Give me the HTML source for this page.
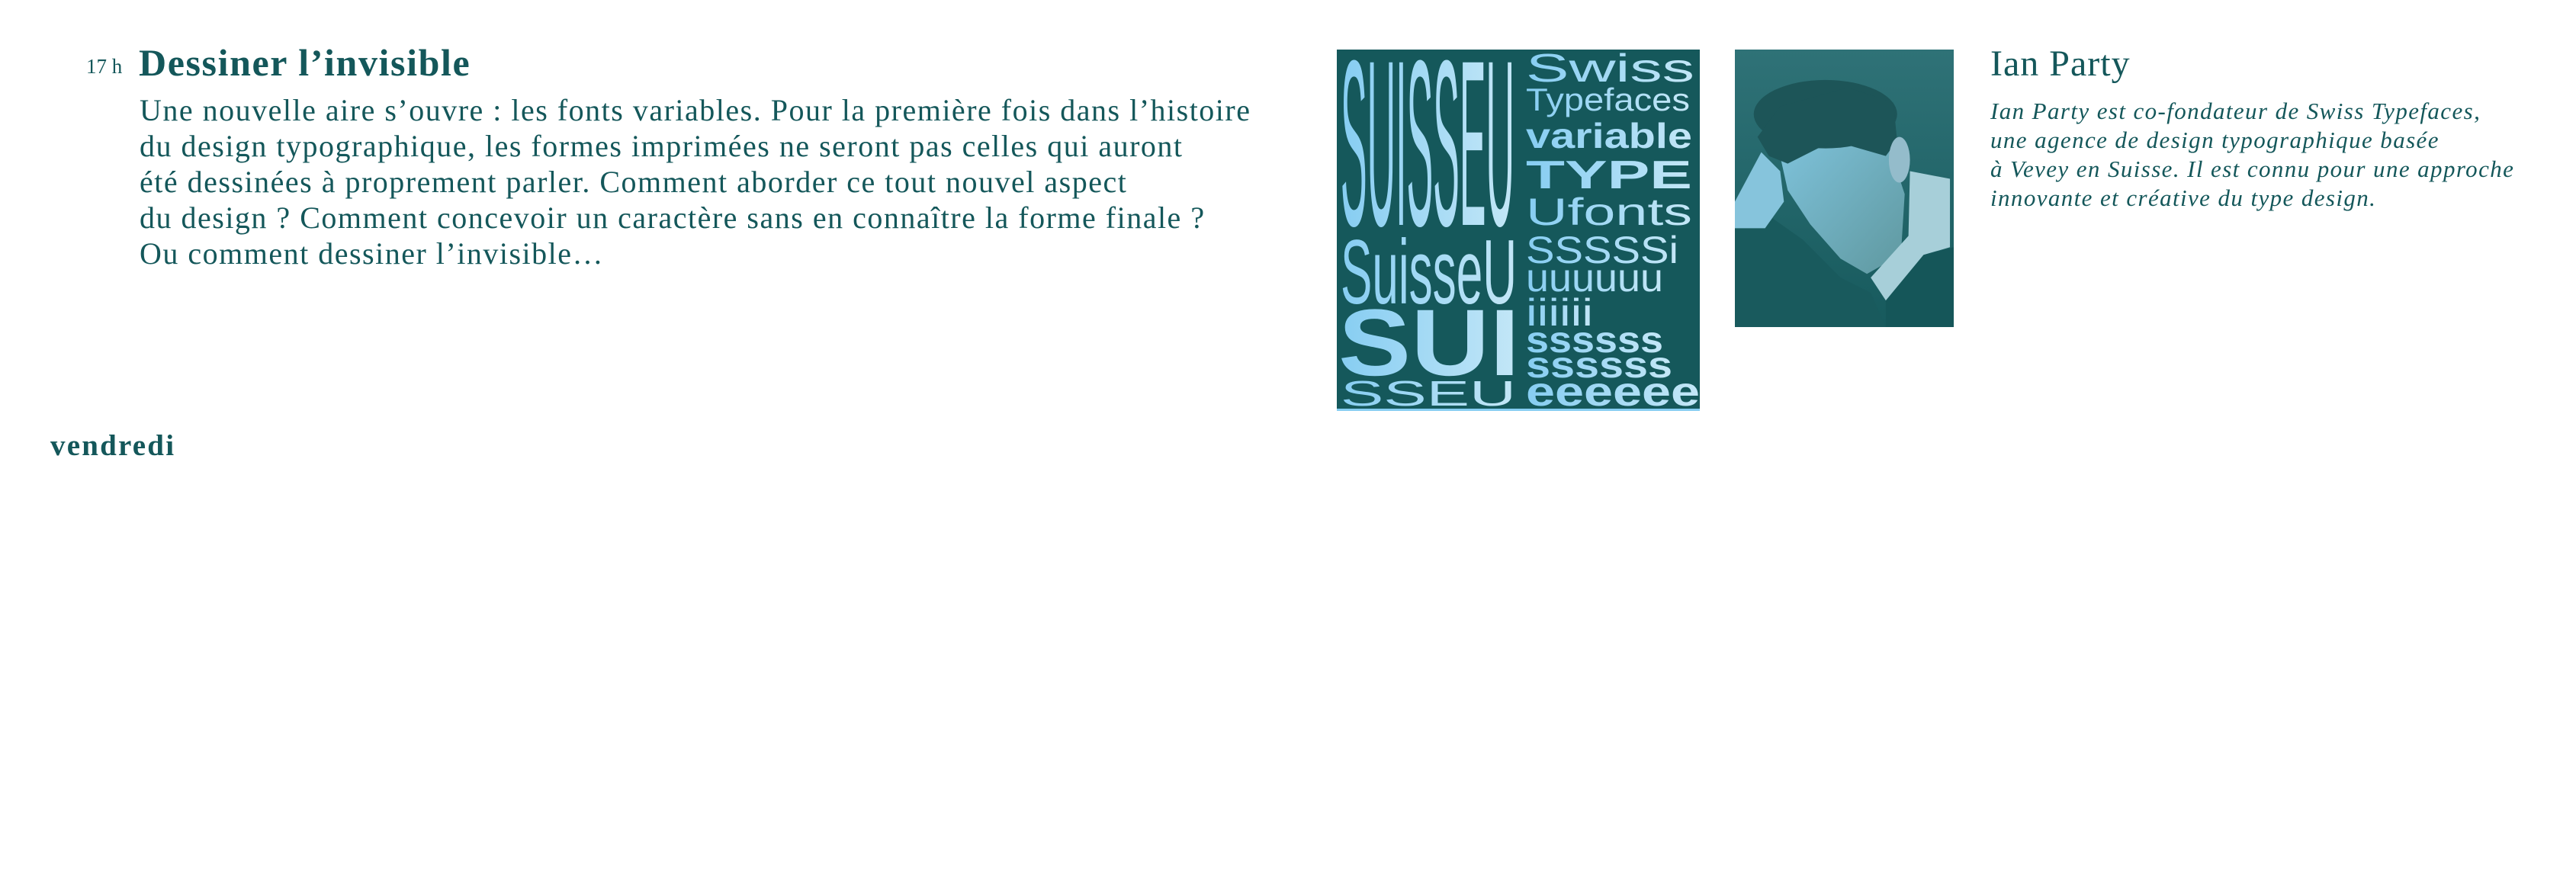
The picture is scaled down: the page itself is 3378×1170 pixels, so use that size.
<!DOCTYPE html>
<html><head><meta charset="utf-8"><style>
html,body{margin:0;padding:0;background:#fff;}
body{width:3378px;height:1170px;position:relative;overflow:hidden;color:#14575a;font-family:"Liberation Serif",serif;}
.a{position:absolute;white-space:nowrap;}
.h{font-size:27px;left:113px;top:72px;}
.t{font-size:50px;font-weight:bold;left:182px;top:53px;letter-spacing:1.6px;}
.b{left:183px;top:121px;font-size:40px;line-height:47px;letter-spacing:1.5px;}
.v{font-size:39px;font-weight:bold;left:66px;top:562px;letter-spacing:2.2px;}
.n{font-size:48px;left:2610px;top:56px;letter-spacing:1px;}
.bio{left:2610px;top:127px;font-size:31px;line-height:38px;font-style:italic;letter-spacing:1.4px;}
</style></head><body>
<div class="a h">17 h</div>
<div class="a t">Dessiner l’invisible</div>
<div class="a b">Une nouvelle aire s’ouvre : les fonts variables. Pour la première fois dans l’histoire<br>du design typographique, les formes imprimées ne seront pas celles qui auront<br>été dessinées à proprement parler. Comment aborder ce tout nouvel aspect<br>du design ? Comment concevoir un caractère sans en connaître la forme finale ?<br>Ou comment dessiner l’invisible…</div>
<div class="a v">vendredi</div>

<svg class="a" style="left:1753px;top:65px" width="476" height="474" viewBox="0 0 476 474" font-family="Liberation Sans, sans-serif">
<defs><linearGradient id="g" x1="0" x2="1"><stop offset="0" stop-color="#86cdf2"/><stop offset="1" stop-color="#c4e7f7"/></linearGradient></defs>
<rect width="476" height="474" fill="#15585b"/>
<rect y="471" width="476" height="3" fill="#86cdf2"/>
<g fill="url(#g)">
<text x="5" y="230" font-size="310" textLength="228" lengthAdjust="spacingAndGlyphs">SUISSEU</text>
<text x="248" y="42" font-size="52" textLength="221" lengthAdjust="spacingAndGlyphs">Swiss</text>
<text x="248" y="80" font-size="42" textLength="215" lengthAdjust="spacingAndGlyphs">Typefaces</text>
<text x="248" y="129" font-size="46" font-weight="bold" textLength="218" lengthAdjust="spacingAndGlyphs">variable</text>
<text x="248" y="182" font-size="52" font-weight="bold" textLength="218" lengthAdjust="spacingAndGlyphs">TYPE</text>
<text x="248" y="230" font-size="50" textLength="218" lengthAdjust="spacingAndGlyphs">Ufonts</text>
<text x="5" y="333" font-size="120" textLength="231" lengthAdjust="spacingAndGlyphs">SuisseU</text>
<text x="248" y="280" font-size="50" textLength="200" lengthAdjust="spacingAndGlyphs">SSSSSi</text>
<text x="248" y="317" font-size="52" textLength="180" lengthAdjust="spacingAndGlyphs">uuuuuu</text>
<text x="248" y="362" font-size="50" textLength="88" lengthAdjust="spacingAndGlyphs">iiiiii</text>
<text x="2" y="427" font-size="124" font-weight="bold" textLength="238" lengthAdjust="spacingAndGlyphs">SUI</text>
<text x="248" y="397" font-size="48" font-weight="bold" textLength="180" lengthAdjust="spacingAndGlyphs">ssssss</text>
<text x="248" y="430" font-size="48" font-weight="bold" textLength="192" lengthAdjust="spacingAndGlyphs">ssssss</text>
<text x="5" y="467" font-size="46" textLength="230" lengthAdjust="spacingAndGlyphs">SSEU</text>
<text x="248" y="467" font-size="54" font-weight="bold" textLength="228" lengthAdjust="spacingAndGlyphs">eeeeee</text>
</g>
</svg>

<svg class="a" style="left:2275px;top:65px" width="287" height="364" viewBox="0 0 290 365" preserveAspectRatio="none">
<defs><linearGradient id="bg" x1="0" y1="0" x2="0" y2="1"><stop offset="0" stop-color="#2f7277"/><stop offset="1" stop-color="#175a5d"/></linearGradient>
<linearGradient id="fc" x1="0" y1="0" x2="1" y2="1"><stop offset="0" stop-color="#7fc3dc"/><stop offset="1" stop-color="#5f989f"/></linearGradient></defs>
<rect width="290" height="365" fill="url(#bg)"/>
<polygon points="0,230 40,215 90,250 140,300 180,320 200,365 0,365" fill="#195a5d"/>
<polygon points="200,310 250,270 290,260 290,365 200,365" fill="#155659"/>
<polygon points="0,200 35,135 60,160 65,200 40,235 0,235" fill="#86c4dc"/>
<polygon points="60,140 130,110 200,115 225,190 220,270 175,295 140,275 100,230 70,185" fill="url(#fc)"/>
<ellipse cx="120" cy="85" rx="95" ry="45" fill="#1d5558"/>
<polygon points="30,115 60,75 150,50 210,70 215,120 200,140 130,120 70,150 45,140" fill="#1d5558"/>
<ellipse cx="218" cy="145" rx="14" ry="30" fill="#94bccb"/>
<polygon points="232,160 285,170 285,260 250,270 200,330 180,300 230,245" fill="#a7cfd9"/>
</svg>

<div class="a n">Ian Party</div>
<div class="a bio">Ian Party est co-fondateur de Swiss Typefaces,<br>une agence de design typographique basée<br>à Vevey en Suisse. Il est connu pour une approche<br>innovante et créative du type design.</div>
</body></html>
